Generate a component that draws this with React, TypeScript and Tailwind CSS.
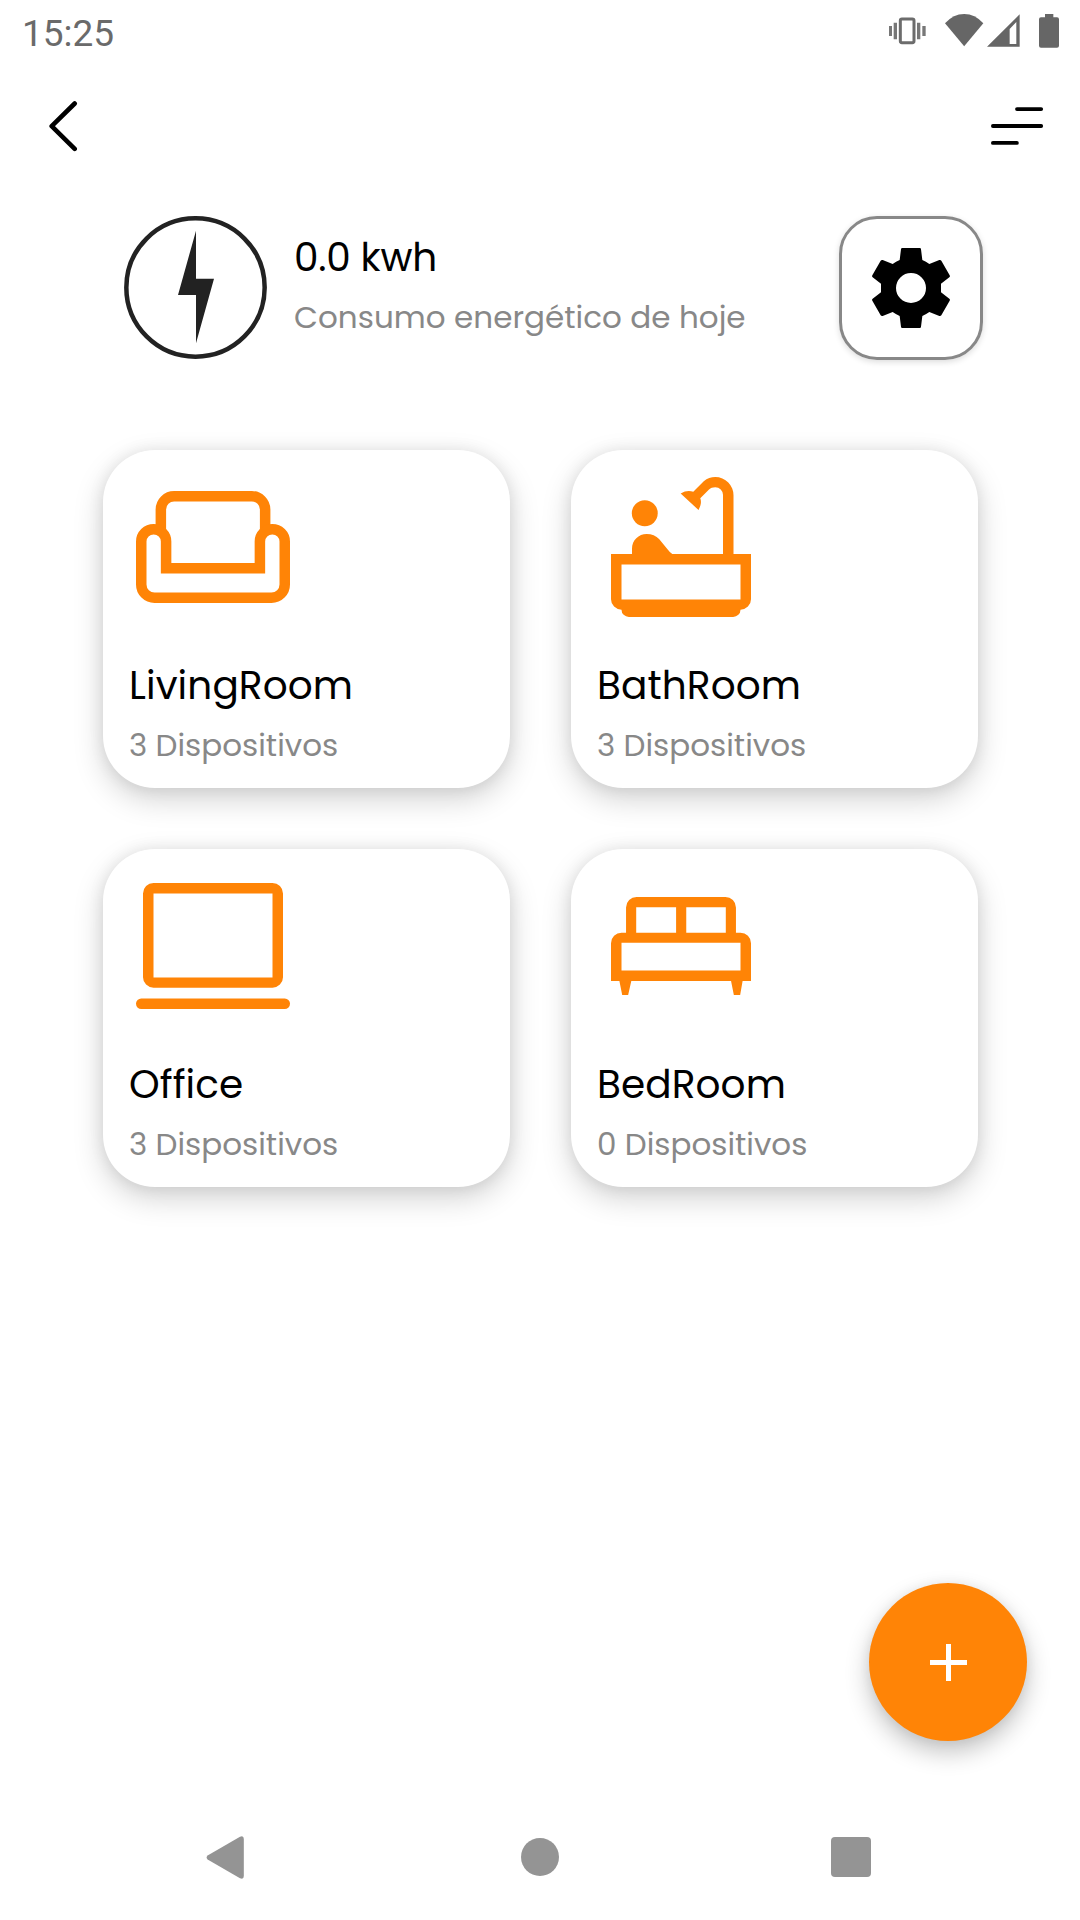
import React from "react";

const SofaIcon = () => (
  <svg viewBox="0 0 48 48" className="size-[168px]" fill="none" stroke="#ff8406" strokeWidth="3">
    <path d="M9.1 19.2V13.3a3.8 3.8 0 0 1 3.8-3.8h22.2a3.8 3.8 0 0 1 3.8 3.8v5.9" />
    <path d="M3.5 34.7V22.4a3.55 3.5 0 0 1 7.1 0v7.7h26.8v-7.7a3.55 3.5 0 0 1 7.1 0v12.3a3.8 3.8 0 0 1-3.8 3.8H7.3a3.8 3.8 0 0 1-3.8-3.8Z" />
  </svg>
);

const BathIcon = () => (
  <svg viewBox="0 0 48 48" className="size-[168px]" fill="#ff8406">
    <circle cx="13.65" cy="14.35" r="3.7" />
    <path d="M10 27v-2.5c0-2.4 1.9-4.2 4.2-4.2 1.4 0 2.7.5 3.6 1.5l2.4 2.9c.4.5.8.9 1.3 1.3v1Z" />
    <path d="M27.5 8.2l3-3C31.5 4.3 32.6 4 33.8 4A5.2 5.2 0 0 1 39 9.3V27h-3V9.1a2.2 2.2 0 0 0-2.2-2.2c-.8 0-1.3.2-1.8.7l-2.5 2.5c.4 1 .2 2.1-.5 3.3l-5.1-4.7c1.3-.8 2.5-.9 3.6-.5Z" />
    <path
      fillRule="evenodd"
      d="M4 26h40v12.9a3 3 0 0 1-3 3A2.1 2.1 0 0 1 38.900 44H9.100A2.100 2.100 0 0 1 7 41.900a3 3 0 0 1-3-3ZM7 29v10h34V29Z"
    />
  </svg>
);

const LaptopIcon = () => (
  <svg viewBox="0 0 48 48" className="size-[168px]" fill="#ff8406">
    <path fillRule="evenodd" d="M7 6h34a3 3 0 0 1 3 3v23.900a3 3 0 0 1-3 3H7a3 3 0 0 1-3-3V9a3 3 0 0 1 3-3ZM7 9v24h34V9Z" />
    <rect x="2" y="39" width="44" height="3" rx="1.500" />
  </svg>
);

const BedIcon = () => (
  <svg viewBox="0 0 48 48" className="size-[168px]" fill="#ff8406">
    <path
      fillRule="evenodd"
      d="M4 34V23.200a3 3 0 0 1 3-3h1.300V13a3 3 0 0 1 3-3h25.400a3 3 0 0 1 3 3v7.200H41a3 3 0 0 1 3 3V34h-2.400l-.7 4h-1.800l-.8-4H9.800l-.9 4H7.200l-.8-4ZM11.200 12.900v7.300h11.400v-7.300ZM25.500 12.900v7.300h11.300v-7.300ZM7 23.100V31h34v-7.900Z"
    />
  </svg>
);

const GearIcon = () => (
  <svg viewBox="153 144 240 240" className="size-20">
    <path
      fillRule="evenodd"
      d="M247 144H299Q303 144 303 148L307 180Q318 185 328 192L358 180Q362 179 364 182L389 226Q391 229 388 232L363 251V277L388 296Q391 299 389 302L364 346Q362 349 358 348L328 336Q318 343 307 348L303 380Q303 384 299 384H247Q243 384 243 380L239 348Q228 343 218 336L188 348Q184 349 182 346L157 302Q155 299 158 296L183 277V251L158 232Q155 229 157 226L182 182Q184 179 188 180L218 192Q228 185 239 180L243 148Q243 144 247 144ZM273 219A45 45 0 1 0 273 309A45 45 0 1 0 273 219Z"
    />
  </svg>
);

const rooms = [
  { name: "LivingRoom", devices: "3 Dispositivos", Icon: SofaIcon },
  { name: "BathRoom", devices: "3 Dispositivos", Icon: BathIcon },
  { name: "Office", devices: "3 Dispositivos", Icon: LaptopIcon },
  { name: "BedRoom", devices: "0 Dispositivos", Icon: BedIcon },
];

const StatusBar = () => (
  <header className="flex h-[62px] items-start justify-between pr-[21px] pl-[22px]">
    <time className="pt-[13px] font-[Roboto] text-[37px] leading-[42px] text-[#6a6a6a]">15:25</time>
    <div className="flex pt-[14px]">
      <svg viewBox="87 42 110 102" className="h-[34px] w-[36.67px]" fill="#777">
        <rect x="121" y="57" width="41" height="71" rx="5" fill="none" stroke="#6c6c6c" strokeWidth="9" />
        <path d="M101 68h10v50h-10zM87 78h9v30h-9zM171 68h10v50h-10zM187 78h10v30h-10z" />
      </svg>
      <svg viewBox="256 42 115 102" className="ml-[19.67px] h-[34px] w-[38.33px]" fill="#666">
        <path d="M256 70Q281 42 313.500 42T371 70L313.500 139Z" />
      </svg>
      <svg viewBox="382 42 98 102" className="ml-[3.67px] h-[34px] w-[32.67px]" fill="#666">
        <path fillRule="evenodd" d="M382 140L480 43V140ZM450 87V132H470V66Z" />
      </svg>
      <svg viewBox="537 42 60 102" className="ml-[19px] h-[34px] w-5" fill="#666">
        <path d="M555 42h25v10h11q6 0 6 6v79q0 6-6 6h-48q-6 0-6-6V58q0-6 6-6h12z" />
      </svg>
    </div>
  </header>
);

export default function App() {
  return (
    <div className="relative flex h-[1920px] w-[1080px] flex-col overflow-hidden bg-white font-['Poppins','Inter',sans-serif] text-black">
      <StatusBar />

      <nav className="flex h-32 items-center justify-between pr-[36px] pl-[49px]">
        <button aria-label="Voltar">
          <svg viewBox="0 0 29 51" className="h-[51px] w-[29px]" fill="none" stroke="black" strokeWidth="4.600" strokeLinecap="round" strokeLinejoin="round">
            <path d="M25.700 2.500L2.700 25.200l23 22.700" />
          </svg>
        </button>
        <button aria-label="Menu">
          <svg viewBox="0 0 53 38" className="h-[38px] w-[53px]" stroke="black" strokeWidth="3.800" strokeLinecap="round">
            <path d="M26 2.100H50.200M1.900 19H50.200M1.900 35.900h24" />
          </svg>
        </button>
      </nav>

      <section className="mt-[26px] flex h-36 pr-[97px] pl-[124px]">
        <svg viewBox="42 47 429 429" className="size-[143px]">
          <circle cx="256.500" cy="261.500" r="207.500" fill="none" stroke="#222" strokeWidth="13.500" />
          <path d="M258 91V235H312L258 429V284H204Z" fill="#222" />
        </svg>
        <div className="ml-[27px] flex-1 pt-3">
          <h1 className="text-[39px] leading-[60px] tracking-[-0.25px]">0.0 kwh</h1>
          <p className="text-[31px] leading-[59px] tracking-[0.04px] whitespace-nowrap text-[#888]">Consumo energético de hoje</p>
        </div>
        <button aria-label="Configurações" className="flex size-36 items-center justify-center rounded-[38px] border-3 border-[#888] shadow-[0_2px_6px_rgba(0,0,0,0.14)]">
          <GearIcon />
        </button>
      </section>

      <main className="mt-[90px] grid grid-cols-[407px_407px] gap-[61px] pl-[103px]">
        {rooms.map(({ name, devices, Icon }) => (
          <article
            key={name}
            className="flex h-[338px] flex-col rounded-[52px] bg-white pl-[26px] pt-[13px] shadow-[0_11px_30px_rgba(0,0,0,0.18),0_0_16px_rgba(0,0,0,0.08)]"
          >
            <Icon />
            <h2 className="mt-[25px] text-[39px] leading-[60px] tracking-[0.1px]">{name}</h2>
            <p className="text-[31px] leading-[58px] text-[#888]">{devices}</p>
          </article>
        ))}
      </main>

      <button
        aria-label="Adicionar"
        className="absolute right-[53px] bottom-[179px] flex size-[158px] items-center justify-center rounded-full bg-[#ff8406] shadow-[0_11px_24px_rgba(0,0,0,0.24),0_0_12px_rgba(0,0,0,0.06)]"
      >
        <svg viewBox="0 0 37 37" className="size-[37px]" fill="white">
          <path d="M16 0h5v16h16v5H21v16h-5V21H0v-5h16z" />
        </svg>
      </button>

      <footer className="mt-auto flex h-[126px] items-center pl-[206px]">
        <svg viewBox="0 0 38 43" className="h-[43px] w-[38px]" fill="#949494">
          <path d="M1.600 19.500L34 .8q3.800-1.600 3.800 2.200v37q0 3.800-3.800 2.200L1.600 23.500q-2-2 0-4z" />
        </svg>
        <span className="ml-[276.500px] size-[38.500px] rounded-full bg-[#949494]" />
        <span className="ml-[272px] size-10 rounded-[4px] bg-[#949494]" />
      </footer>
    </div>
  );
}
